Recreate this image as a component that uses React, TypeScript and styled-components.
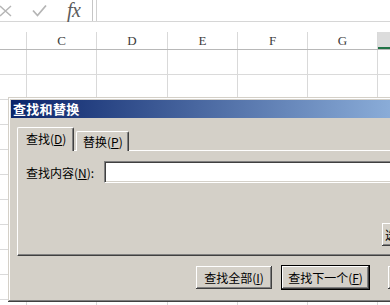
import React from "react";
import styled, { createGlobalStyle } from "styled-components";

const Global = createGlobalStyle`
  html, body { margin: 0; padding: 0; background: #fff; }
  body { font-family: "Noto Sans CJK SC", "Liberation Sans", sans-serif; }
`;

const Screen = styled.div`
  position: relative;
  width: 390px;
  height: 305px;
  overflow: hidden;
  background: #fff;
`;

/* ---------- formula bar ---------- */
const FormulaBar = styled.div`
  display: flex;
  height: 21px;
  border-bottom: 1px solid #d6d6d6;
`;

const FxTools = styled.div`
  width: 93px;
  display: flex;
  align-items: center;
  border-right: 1px solid #c6c6c6;
  box-sizing: border-box;
`;

const ToolIcon = styled.svg<{ $ml: number }>`
  margin-left: ${(p) => p.$ml}px;
  flex: none;
`;

const FxLabel = styled.span`
  margin-left: 20px;
  font-family: "Liberation Serif", "DejaVu Serif", serif;
  font-style: italic;
  font-size: 20px;
  line-height: 21px;
  color: #5c5c5c;
  letter-spacing: -0.5px;
`;

const FormulaInput = styled.div`
  flex: 1;
  margin-left: 3px;
  border-left: 1px solid #d0d0d0;
`;

const Spacer = styled.div`
  height: 10px;
`;

/* ---------- grid ---------- */
const Row = styled.div<{ $h: number; $line: string }>`
  display: flex;
  height: ${(p) => p.$h}px;
  border-bottom: 1px solid ${(p) => p.$line};
`;

const Cell = styled.div<{ $w: number }>`
  flex: none;
  width: ${(p) => p.$w}px;
  box-sizing: border-box;
  border-right: 1px solid #d9d9d9;
`;

const HeadCell = styled(Cell)<{ $sel?: boolean }>`
  display: flex;
  align-items: center;
  justify-content: center;
  font-family: "Liberation Serif", "DejaVu Serif", serif;
  font-size: 13px;
  color: #3c3c3c;
  background: ${(p) => (p.$sel ? "#dcdcdc" : "#fff")};
  border-right-color: ${(p) => (p.$sel ? "#c0c0c0" : "#d9d9d9")};
  box-shadow: ${(p) => (p.$sel ? "inset 0 -2px #217346" : "none")};
`;

/* ---------- dialog ---------- */
const Dialog = styled.div`
  position: absolute;
  left: 8px;
  top: 97px;
  width: 468px;
  height: 205px;
  box-sizing: border-box;
  padding: 3px;
  background: #d4d0c8;
  box-shadow: inset -1px -1px #404040, inset 1px 1px #d4d0c8,
    inset -2px -2px #808080, inset 2px 2px #ffffff;
  display: flex;
  flex-direction: column;
  font-size: 12px;
  color: #000;
`;

const TitleBar = styled.div`
  height: 18px;
  line-height: 18px;
  padding-left: 2px;
  background: linear-gradient(to right, #0a246a, #a6caf0);
  color: #fff;
  font-weight: bold;
  font-size: 13px;
  letter-spacing: 0.3px;
`;

const Body = styled.div`
  flex: 1;
  display: flex;
  flex-direction: column;
  padding: 9px 6px 0;
`;

const TabStrip = styled.div`
  display: flex;
  align-items: flex-end;
  height: 24px;
  margin-bottom: -1px;
  position: relative;
  z-index: 1;
`;

const Tab = styled.div<{ $active?: boolean }>`
  box-sizing: border-box;
  width: ${(p) => (p.$active ? 57 : 53)}px;
  height: ${(p) => (p.$active ? 24 : 20)}px;
  margin-left: ${(p) => (p.$active ? 0 : 2)}px;
  padding-left: ${(p) => (p.$active ? 8 : 6)}px;
  line-height: ${(p) => (p.$active ? 22 : 19)}px;
  background: #d4d0c8;
  border-top: 1px solid #fff;
  border-left: 1px solid #fff;
  border-right: 1px solid #404040;
  box-shadow: inset -1px 0 #808080;
  border-radius: 2px 2px 0 0;
  white-space: nowrap;
`;

const Key = styled.span`
  text-decoration: underline;
`;

const Panel = styled.div`
  height: 106px;
  box-sizing: border-box;
  border-top: 1px solid #fff;
  border-left: 1px solid #fff;
  border-right: 1px solid #404040;
  border-bottom: 1px solid #404040;
  box-shadow: inset -1px -1px #808080;
  padding: 10px 8px 9px;
  display: flex;
  flex-direction: column;
`;

const FieldRow = styled.div`
  display: flex;
  align-items: center;
  height: 22px;
`;

const Label = styled.span`
  width: 78px;
  flex: none;
  white-space: nowrap;
`;

const TextBox = styled.div`
  flex: 1;
  height: 22px;
  box-sizing: border-box;
  background: #fff;
  border-top: 1px solid #808080;
  border-left: 1px solid #808080;
  border-right: 1px solid #fff;
  border-bottom: 1px solid #fff;
  box-shadow: inset 1px 1px #404040, inset -1px -1px #d4d0c8;
`;

const PanelButtons = styled.div`
  margin-top: auto;
  display: flex;
  justify-content: flex-end;
`;

const Button = styled.div<{ $w: number; $default?: boolean; $start?: boolean }>`
  width: ${(p) => p.$w}px;
  height: ${(p) => (p.$default ? 25 : 23)}px;
  box-sizing: border-box;
  display: flex;
  align-items: center;
  justify-content: ${(p) => (p.$start ? "flex-start" : "center")};
  padding-left: ${(p) => (p.$start ? 3 : 0)}px;
  background: #d4d0c8;
  white-space: nowrap;
  border: ${(p) => (p.$default ? "1px solid #000" : "none")};
  box-shadow: inset -1px -1px #404040, inset 1px 1px #fff,
    inset -2px -2px #808080, inset 2px 2px #d4d0c8;
`;

const ButtonRow = styled.div`
  display: flex;
  align-items: center;
  justify-content: flex-end;
  margin-top: 9px;
  padding-right: 3px;
  gap: 9px;
`;

const Gap = styled.div`
  width: 0;
`;

const COLS = [27, 70, 71, 70, 70, 70, 70];
const HEADS = ["", "C", "D", "E", "F", "G", ""];

export default function App() {
  return (
    <>
      <Global />
      <Screen>
        <FormulaBar>
          <FxTools>
            <ToolIcon $ml={-2} width="15" height="12" viewBox="0 0 15 12">
              <path d="M2 1 L13 11 M13 1 L2 11" stroke="#b5b5b5" strokeWidth="1.4" fill="none" />
            </ToolIcon>
            <ToolIcon $ml={19} width="15" height="13" viewBox="0 0 15 13">
              <path d="M1 6.5 L5.5 11.5 L14 1.5" stroke="#b5b5b5" strokeWidth="1.8" fill="none" />
            </ToolIcon>
            <FxLabel>fx</FxLabel>
          </FxTools>
          <FormulaInput />
        </FormulaBar>
        <Spacer />
        <Row $h={17} $line="#b8b8b8">
          {COLS.map((w, i) => (
            <HeadCell key={i} $w={w} $sel={i === 6}>
              {HEADS[i]}
            </HeadCell>
          ))}
        </Row>
        {Array.from({ length: 11 }).map((_, r) => (
          <Row key={r} $h={24} $line="#dadada">
            {COLS.map((w, i) => (
              <Cell key={i} $w={w} />
            ))}
          </Row>
        ))}

        <Dialog>
          <TitleBar>查找和替换</TitleBar>
          <Body>
            <TabStrip>
              <Tab $active>
                查找(<Key>D</Key>)
              </Tab>
              <Tab>
                替换(<Key>P</Key>)
              </Tab>
            </TabStrip>
            <Panel>
              <FieldRow>
                <Label>
                  查找内容(<Key>N</Key>):
                </Label>
                <TextBox />
              </FieldRow>
              <PanelButtons>
                <Button $w={76} $start>
                  选项(<Key>T</Key>) &gt;&gt;
                </Button>
              </PanelButtons>
            </Panel>
            <ButtonRow>
              <Button $w={76}>
                查找全部(<Key>I</Key>)
              </Button>
              <Button $w={89} $default>
                查找下一个(<Key>F</Key>)
              </Button>
              <Gap />
              <Button $w={76}>关闭</Button>
            </ButtonRow>
          </Body>
        </Dialog>
      </Screen>
    </>
  );
}
